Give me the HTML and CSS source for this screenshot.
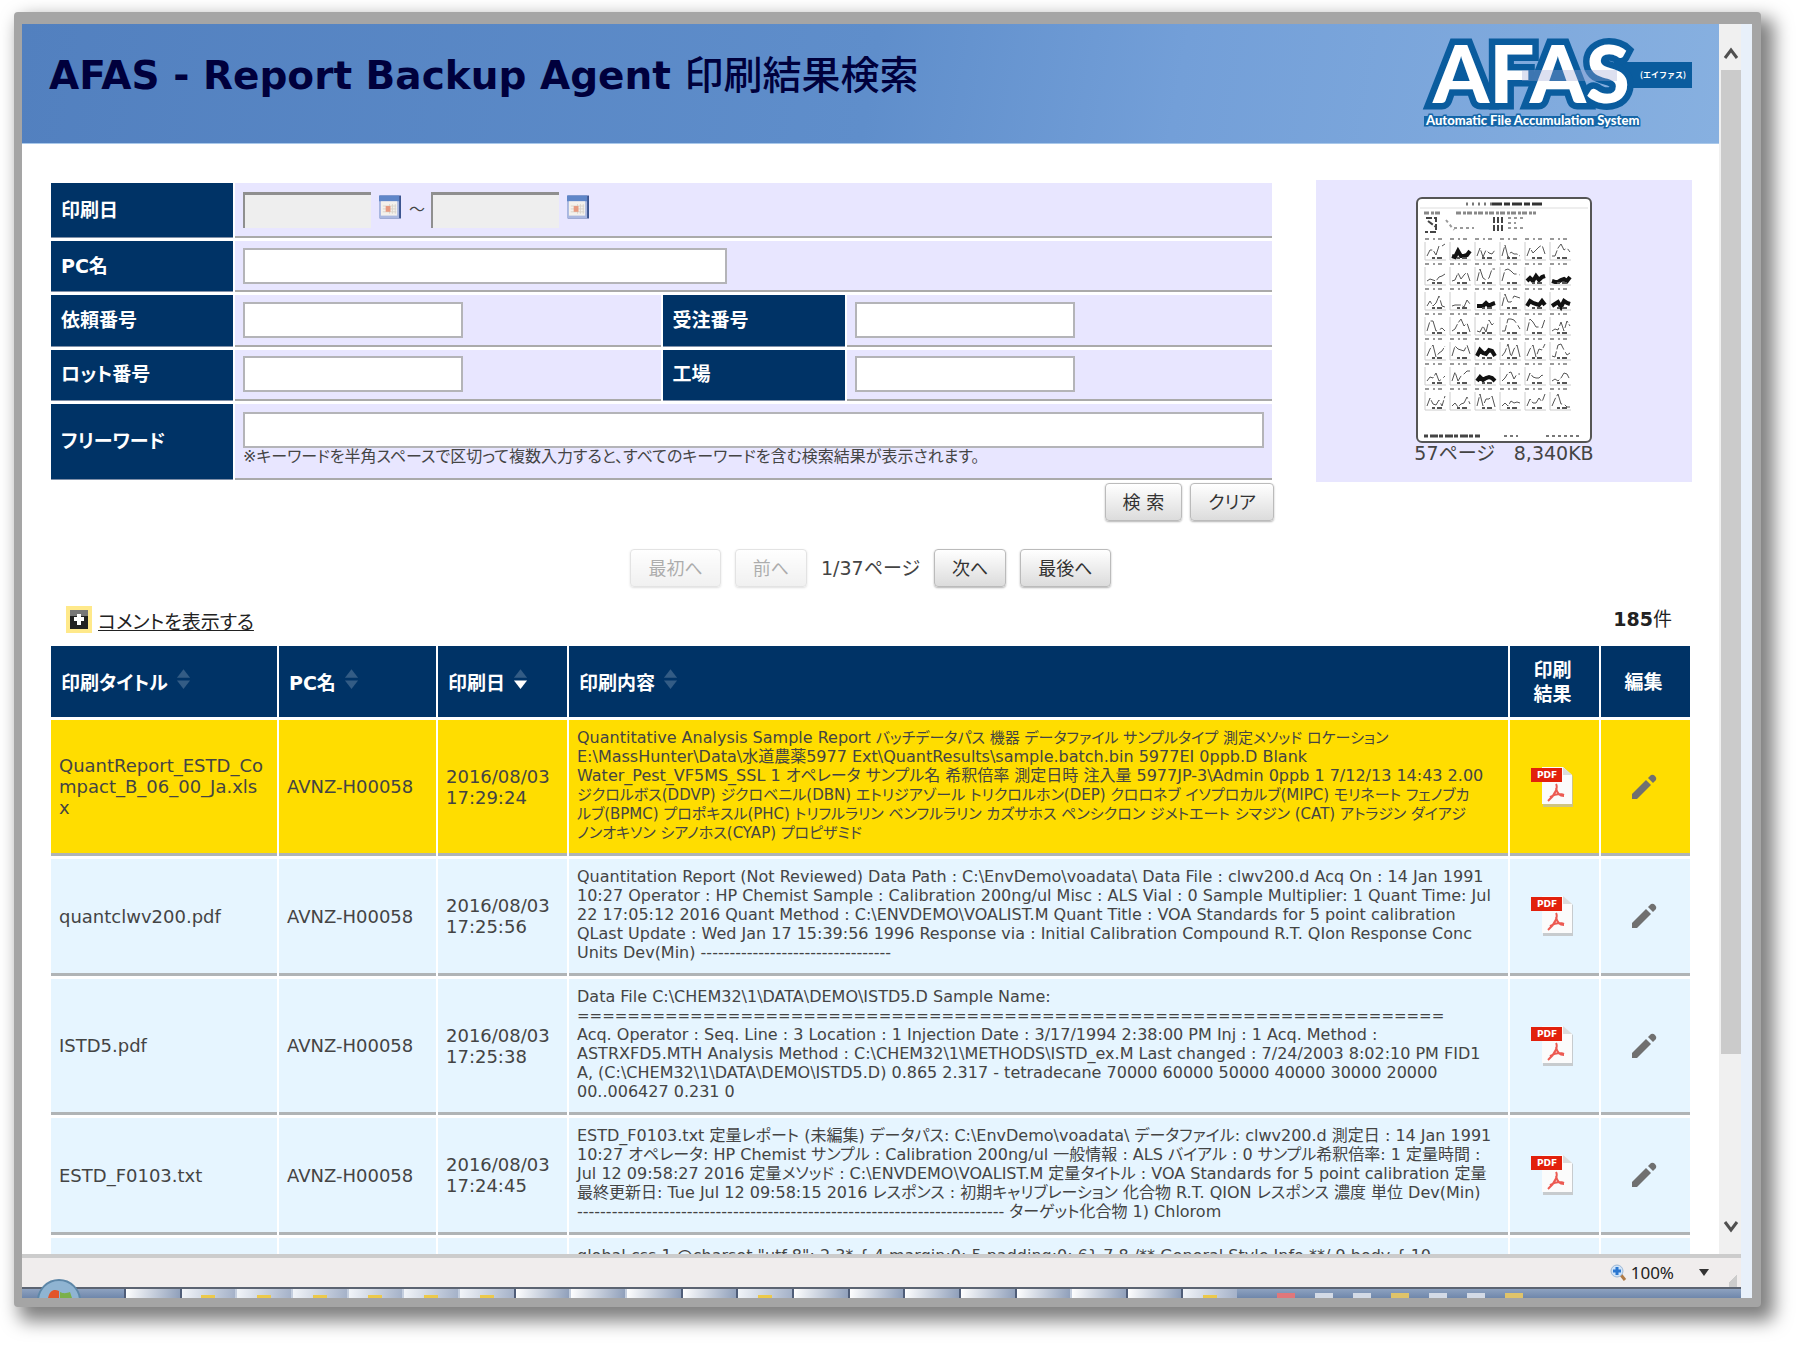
FILE: index.html
```html
<!DOCTYPE html>
<html lang="ja">
<head>
    <meta charset="UTF-8">
    <meta name="viewport" content="width=device-width, initial-scale=1.0">
    <title>AFAS - Report Backup Agent 印刷結果検索</title>
    <link rel="stylesheet" href="styles.css">
</head>
<body>
    <svg class="defs" aria-hidden="true">
        <symbol id="calendar" viewBox="0 0 23 24">
            <rect x="1" y="0" width="22" height="24" fill="#3c5590"/>
            <rect x="0" y="0" width="21" height="24" fill="#a9b7e0"/>
            <rect x="0" y="0" width="21" height="6" fill="#5f86c8"/>
            <rect x="2" y="6" width="17" height="15" fill="#f4f1ec"/>
            <path d="M11 9v10M14 9v10M17 9v10M4 11h14M4 14h14M4 17h14" stroke="#d8d4cc"/>
            <rect x="7" y="11" width="5" height="6" fill="#e79a80"/>
        </symbol>
        <symbol id="sort" viewBox="0 0 16 22">
            <path class="up" d="M1 9L8 0l7 9z"/>
            <path class="down" d="M1 12h14l-7 9z"/>
        </symbol>
        <symbol id="pdf" viewBox="0 0 44 42">
            <path d="M12 2h21l9 8v31H12z" fill="#b9b9b9" opacity=".7"/>
            <path d="M11 1h21l9 8v29H11z" fill="#fbfbfb"/>
            <path d="M32 1l9 8h-9z" fill="#dcdcdc"/>
            <rect x="0" y="2" width="31" height="14" fill="#e2200c"/>
            <text x="6" y="12" class="pdf-text">PDF</text>
            <path d="M25 18c2 3 0 10-8 17M25 22c1 5 4 8 8 8M19 31c5-3 10-4 14-2" fill="none" stroke="#ec5a52" stroke-width="2"/>
        </symbol>
        <symbol id="pencil" viewBox="0 0 26 26">
            <path d="M1 20L15 6l5 5L6 25H1z" fill="#707070"/>
            <path d="M17 4l3-3q2-1 4 1t1 4l-3 3z" fill="#707070"/>
        </symbol>
    </svg>

    <div class="window">
        <div class="view">
            <div class="page">
                <header class="header">
                    <h1>AFAS - Report Backup Agent <span>印刷結果検索</span></h1>
                    <svg class="logo" viewBox="0 0 268 92" role="img" aria-label="AFAS Automatic File Accumulation System">
                        <rect x="190" y="24" width="78" height="26" fill="#0a5c9e"/>
                        <text x="9" y="65" class="logo-name">AFAS</text>
                        <rect x="98" y="32" width="95" height="11" fill="#9ea6d4" opacity=".35"/>
                        <text x="216" y="40" class="logo-kana">(エイファス)</text>
                        <rect x="0" y="78" width="214" height="10" fill="#1566a8"/>
                        <text x="2" y="87" class="logo-sub">Automatic File Accumulation System</text>
                    </svg>
                </header>

                <main>
                    <section class="search">
                        <form>
                            <table class="search-table">
                                <colgroup><col class="s-label"><col class="s-field"><col class="s-label"><col class="s-field"></colgroup>
                                <tr class="row-date">
                                    <th><label for="date-from">印刷日</label></th>
                                    <td colspan="3">
                                        <div class="dates">
                                            <input type="text" id="date-from" class="date">
                                            <svg class="cal"><use href="#calendar"/></svg>
                                            <span>～</span>
                                            <input type="text" id="date-to" class="date" aria-label="印刷日(終了)">
                                            <svg class="cal"><use href="#calendar"/></svg>
                                        </div>
                                    </td>
                                </tr>
                                <tr>
                                    <th><label for="pc">PC名</label></th>
                                    <td colspan="3"><input type="text" id="pc" class="medium"></td>
                                </tr>
                                <tr>
                                    <th><label for="request">依頼番号</label></th>
                                    <td><input type="text" id="request" class="short"></td>
                                    <th><label for="order">受注番号</label></th>
                                    <td><input type="text" id="order" class="short"></td>
                                </tr>
                                <tr>
                                    <th><label for="lot">ロット番号</label></th>
                                    <td><input type="text" id="lot" class="short"></td>
                                    <th><label for="factory">工場</label></th>
                                    <td><input type="text" id="factory" class="short"></td>
                                </tr>
                                <tr class="row-free">
                                    <th><label for="free">フリーワード</label></th>
                                    <td colspan="3">
                                        <input type="text" id="free" class="full">
                                        <p class="note">※キーワードを半角スペースで区切って複数入力すると、すべてのキーワードを含む検索結果が表示されます。</p>
                                    </td>
                                </tr>
                            </table>
                            <div class="form-buttons">
                                <button type="button">検 索</button>
                                <button type="button">クリア</button>
                            </div>
                        </form>
                        <aside class="preview">
                            <svg class="thumb" viewBox="0 0 176 246" role="img" aria-label="レポート">
                                <rect x="1" y="1" width="174" height="244" rx="5" fill="#fff" stroke="#555" stroke-width="2"/>
                                <path d="M4 11h168" stroke="#ddd"/>
                                <g id="plots"></g>
                            </svg>
                            <p>57ページ　8,340KB</p>
                        </aside>
                    </section>

                    <nav class="pager">
                        <button type="button" disabled>最初へ</button>
                        <button type="button" disabled>前へ</button>
                        <span>1/37ページ</span>
                        <button type="button">次へ</button>
                        <button type="button">最後へ</button>
                    </nav>

                    <div class="list-head">
                        <a href="#" class="comment">
                            <svg viewBox="0 0 26 27"><rect width="26" height="27" fill="#ffe98a"/><rect x="4" y="4" width="18" height="19" fill="#222"/><rect x="4" y="4" width="18" height="6" fill="#777"/><path d="M13 8v11M8 13h10" stroke="#fff" stroke-width="4"/></svg>
                            <span>コメントを表示する</span>
                        </a>
                        <span class="count"><b>185</b>件</span>
                    </div>

                    <table class="results">
                        <colgroup><col class="c-title"><col class="c-pc"><col class="c-date"><col><col class="c-icon"><col class="c-icon"></colgroup>
                        <thead>
                            <tr>
                                <th>印刷タイトル<svg class="sort"><use href="#sort"/></svg></th>
                                <th>PC名<svg class="sort"><use href="#sort"/></svg></th>
                                <th>印刷日<svg class="sort desc"><use href="#sort"/></svg></th>
                                <th>印刷内容<svg class="sort"><use href="#sort"/></svg></th>
                                <th class="center">印刷<br>結果</th>
                                <th class="center">編集</th>
                            </tr>
                        </thead>
                        <tbody>
                            <tr class="selected">
                                <td>QuantReport_ESTD_Co<br>mpact_B_06_00_Ja.xls<br>x</td>
                                <td>AVNZ-H00058</td>
                                <td>2016/08/03 17:29:24</td>
                                <td class="body">Quantitative Analysis Sample Report <span class="small">バッチデータパス 機器 データファイル サンプルタイプ 測定メソッド ロケーション</span><br>E:\MassHunter\Data\水道農薬5977 Ext\QuantResults\sample.batch.bin 5977EI 0ppb.D Blank<br>Water_Pest_VF5MS_SSL 1 オペレータ サンプル名 希釈倍率 測定日時 注入量 5977JP-3\Admin 0ppb 1 7/12/13 14:43 2.00<br><span class="small">ジクロルボス(DDVP) ジクロベニル(DBN) エトリジアゾール トリクロルホン(DEP) クロロネブ イソプロカルブ(MIPC) モリネート フェノブカ<br>ルブ(BPMC) プロポキスル(PHC) トリフルラリン ベンフルラリン カズサホス ペンシクロン ジメトエート シマジン (CAT) アトラジン ダイアジ<br>ノンオキソン シアノホス(CYAP) プロピザミド</span></td>
                                <td class="center"><a href="#" aria-label="PDF"><svg class="pdf"><use href="#pdf"/></svg></a></td>
                                <td class="center"><a href="#" aria-label="編集"><svg class="pencil"><use href="#pencil"/></svg></a></td>
                            </tr>
                            <tr>
                                <td>quantclwv200.pdf</td>
                                <td>AVNZ-H00058</td>
                                <td>2016/08/03 17:25:56</td>
                                <td class="body">Quantitation Report (Not Reviewed) Data Path : C:\EnvDemo\voadata\ Data File : clwv200.d Acq On : 14 Jan 1991<br>10:27 Operator : HP Chemist Sample : Calibration 200ng/ul Misc : ALS Vial : 0 Sample Multiplier: 1 Quant Time: Jul<br>22 17:05:12 2016 Quant Method : C:\ENVDEMO\VOALIST.M Quant Title : VOA Standards for 5 point calibration<br>QLast Update : Wed Jan 17 15:39:56 1996 Response via : Initial Calibration Compound R.T. QIon Response Conc<br>Units Dev(Min) ---------------------------------</td>
                                <td class="center"><a href="#" aria-label="PDF"><svg class="pdf"><use href="#pdf"/></svg></a></td>
                                <td class="center"><a href="#" aria-label="編集"><svg class="pencil"><use href="#pencil"/></svg></a></td>
                            </tr>
                            <tr>
                                <td>ISTD5.pdf</td>
                                <td>AVNZ-H00058</td>
                                <td>2016/08/03 17:25:38</td>
                                <td class="body">Data File C:\CHEM32\1\DATA\DEMO\ISTD5.D Sample Name:<br><span class="small">=====================================================================</span><br>Acq. Operator : Seq. Line : 3 Location : 1 Injection Date : 3/17/1994 2:38:00 PM Inj : 1 Acq. Method :<br>ASTRXFD5.MTH Analysis Method : C:\CHEM32\1\METHODS\ISTD_ex.M Last changed : 7/24/2003 8:02:10 PM FID1<br>A, (C:\CHEM32\1\DATA\DEMO\ISTD5.D) 0.865 2.317 - tetradecane 70000 60000 50000 40000 30000 20000<br>00..006427 0.231 0</td>
                                <td class="center"><a href="#" aria-label="PDF"><svg class="pdf"><use href="#pdf"/></svg></a></td>
                                <td class="center"><a href="#" aria-label="編集"><svg class="pencil"><use href="#pencil"/></svg></a></td>
                            </tr>
                            <tr>
                                <td>ESTD_F0103.txt</td>
                                <td>AVNZ-H00058</td>
                                <td>2016/08/03 17:24:45</td>
                                <td class="body">ESTD_F0103.txt 定量レポート (未編集) データパス: C:\EnvDemo\voadata\ データファイル: clwv200.d 測定日 : 14 Jan 1991<br>10:27 オペレータ: HP Chemist サンプル : Calibration 200ng/ul 一般情報 : ALS バイアル : 0 サンプル希釈倍率: 1 定量時間 :<br>Jul 12 09:58:27 2016 定量メソッド : C:\ENVDEMO\VOALIST.M 定量タイトル : VOA Standards for 5 point calibration 定量<br>最終更新日: Tue Jul 12 09:58:15 2016 レスポンス : 初期キャリブレーション 化合物 R.T. QION レスポンス 濃度 単位 Dev(Min)<br>-------------------------------------------------------------------------- ターゲット化合物 1) Chlorom</td>
                                <td class="center"><a href="#" aria-label="PDF"><svg class="pdf"><use href="#pdf"/></svg></a></td>
                                <td class="center"><a href="#" aria-label="編集"><svg class="pencil"><use href="#pencil"/></svg></a></td>
                            </tr>
                            <tr>
                                <td></td>
                                <td></td>
                                <td></td>
                                <td class="body">global.css 1 @charset "utf-8"; 2 3* { 4 margin:0; 5 padding:0; 6} 7 8 /** General Style Info **/ 9 body { 10</td>
                                <td></td>
                                <td></td>
                            </tr>
                        </tbody>
                    </table>
                </main>
            </div>

            <div class="scrollbar">
                <svg viewBox="0 0 20 46"><path d="M4 34l6-8 6 8" /></svg>
                <div class="thumb-bar"></div>
                <svg viewBox="0 0 20 46"><path d="M4 14l6 8 6-8" /></svg>
            </div>
        </div>

        <footer class="statusbar">
            <svg class="zoom-icon" viewBox="0 0 17 18"><path d="M11 11l4 5" stroke="#b07a45" stroke-width="3"/><circle cx="7" cy="7" r="6" fill="#cfe3f8" stroke="#9db8d6"/><path d="M7 3v8M3 7h8" stroke="#2b77d0" stroke-width="3"/></svg>
            <span>100%</span>
            <i class="caret"></i>
            <i class="grip"></i>
        </footer>

        <div class="taskbar">
            <svg class="orb" viewBox="0 0 46 20"><circle cx="23" cy="23" r="21" fill="#8fb4d2" stroke="#5d87a8" stroke-width="2"/><path d="M12 20c2-9 7-9 11-7v7z" fill="#e2552a"/><path d="M24 20v-6c4 2 7 1 10 0l2 6z" fill="#7bb04a"/></svg>
            <div class="tasks" id="tasks"></div>
            <div class="tray"><i class="red"></i><i></i><i></i><i class="yellow"></i><i></i><i></i><i class="yellow"></i></div>
        </div>
    </div>

    <script src="script.js"></script>
</body>
</html>
```

FILE: styles.css
```css
* {
    box-sizing: border-box;
}
body {
    margin: 0;
    padding: 12px 39px 39px 14px;
    height: 100vh;
    overflow: hidden;
    background-color: #fff;
    font-family: "DejaVu Sans", "Noto Sans CJK JP", sans-serif;
    font-feature-settings: "palt";
    font-size: 16px;
    line-height: 21px;
    color: #444;
}
.defs {
    position: absolute;
    width: 0;
    height: 0;
}
.window {
    display: flex;
    flex-direction: column;
    height: 100%;
    border: 9px solid #a5a5a5;
    border-width: 12px 9px 9px 8px;
    border-radius: 4px;
    background-color: #e8f0fa;
    box-shadow: 9px 10px 18px 4px rgba(0,0,0,0.5);
}
.view {
    flex: 1;
    display: flex;
    min-height: 0;
    margin-right: 11px;
    background-color: #fff;
}
.page {
    flex: 1;
    min-width: 0;
    overflow: hidden;
}

/* header */
.header {
    display: flex;
    justify-content: space-between;
    height: 120px;
    padding: 14px 27px 0;
    border-bottom: 1px solid #a9c8ea;
    background: linear-gradient(100deg, #5280bf 0%, #5f8ecb 50%, #739fd8 68%, #87b0e0 100%);
}
h1 {
    margin: 16px 0 0;
    font-size: 39px;
    line-height: 44px;
    color: #00003c;
    white-space: nowrap;
}
h1 span {
    font-weight: 500;
}
.logo {
    width: 268px;
    height: 92px;
    overflow: visible;
}
.logo-name {
    font: 900 80px Lato, sans-serif;
    fill: #fff;
    stroke: #0a5c9e;
    stroke-width: 13px;
    paint-order: stroke;
}
.logo-kana {
    font: bold 8px "Noto Sans CJK JP", sans-serif;
    fill: #fff;
}
.logo-sub {
    font: 900 13px Lato, sans-serif;
    fill: #fff;
    stroke: #1566a8;
    stroke-width: 3px;
    paint-order: stroke;
}

/* search form */
main {
    padding: 36px 27px 0;
}
.search {
    display: flex;
    gap: 42px;
    align-items: flex-start;
}
.search form {
    flex: 1;
}
table {
    width: 100%;
    table-layout: fixed;
    border-spacing: 2px 3px;
}
th {
    background-color: #003366;
    color: #fff;
    text-align: left;
    padding: 0 10px;
    font-size: 19px;
}
.search-table {
    height: 303px;
}
.search-table th {
    border-bottom: 1px solid #8090a8;
}
.search-table td {
    padding: 0 8px;
    background-color: #e8e6ff;
    border-bottom: 2px solid #aaa;
}
.search-table tr {
    height: 51px;
}
.search-table .row-date {
    height: 55px;
}
.search-table .row-free {
    height: 76px;
}
.search-table .row-free td {
    padding-bottom: 4px;
}
.s-label {
    width: 182px;
}
input {
    display: block;
    height: 36px;
    border: 2px solid #b4b4b8;
    background-color: #fff;
    font: inherit;
}
.dates {
    display: flex;
    align-items: center;
    gap: 8px;
}
.dates span {
    width: 14px;
    font-feature-settings: normal;
}
.date {
    width: 128px;
    border-width: 3px 0 0 2px;
    border-color: #8f8f8f;
    background-color: #eee;
}
.cal {
    width: 22px;
    height: 24px;
    margin-bottom: 5px;
}
.medium {
    width: 484px;
}
.short {
    width: 220px;
}
.full {
    width: 100%;
}
.note {
    margin: 0;
    font-size: 16px;
    line-height: 18px;
    white-space: nowrap;
}
.form-buttons {
    display: flex;
    justify-content: flex-end;
    gap: 8px;
}
button {
    height: 38px;
    padding: 0 17px;
    border: 1px solid #bbb;
    border-radius: 4px;
    background: linear-gradient(#fff, #dcdcdc);
    box-shadow: 0 1px 2px rgba(0,0,0,0.3);
    font: inherit;
    font-feature-settings: inherit;
    font-size: 18px;
    color: #333;
}
button:disabled {
    opacity: 0.4;
}
.preview {
    width: 376px;
    height: 302px;
    padding-top: 17px;
    background-color: #e8e6ff;
    text-align: center;
}
.preview p {
    margin: 0;
    font-size: 19px;
}
.thumb {
    display: block;
    width: 176px;
    height: 246px;
    margin: 0 auto;
}

/* pager */
.pager {
    display: flex;
    justify-content: center;
    align-items: center;
    gap: 14px;
    margin-top: 28px;
    font-size: 19px;
}
.list-head {
    display: flex;
    justify-content: space-between;
    align-items: center;
    padding: 8px 20px 0 17px;
    height: 56px;
}
.comment {
    display: flex;
    gap: 6px;
    color: #222;
    font-size: 19px;
}
.comment svg {
    width: 26px;
    height: 27px;
}
.comment span {
    margin-top: 6px;
}
.count {
    font-size: 19px;
    color: #222;
}

/* result list */
.c-title {
    width: 226px;
}
.c-pc {
    width: 157px;
}
.c-date {
    width: 129px;
}
.c-icon {
    width: 89px;
}
.results th {
    height: 71px;
    line-height: 24px;
}
.results td {
    height: 117px;
    padding: 0 8px;
    background-color: #e6f5ff;
    border-bottom: 3px solid #b0b4b6;
    font-size: 18px;
}
.results .body {
    padding: 8px 4px 11px 8px;
    font-size: 16px;
    line-height: 19px;
    vertical-align: top;
    white-space: nowrap;
}
.small {
    font-size: 15px;
    line-height: 15px;
}
.results .selected td {
    background-color: #ffdd00;
}
.results .center {
    padding: 0 4px 0 0;
    text-align: center;
}
.sort {
    width: 15px;
    height: 21px;
    margin-left: 8px;
    fill: #335c85;
}
.sort.desc {
    --down: #fff;
}
.down {
    fill: var(--down, #335c85);
}
.pdf {
    width: 44px;
    height: 42px;
    vertical-align: middle;
}
.pdf-text {
    font: bold 9px "DejaVu Sans", sans-serif;
    fill: #fff;
}
.pencil {
    width: 26px;
    height: 26px;
    vertical-align: middle;
}

/* window parts */
.scrollbar {
    display: flex;
    flex-direction: column;
    width: 22px;
    border-left: 2px solid #f0f0f0;
    background-color: #f0f0f0;
}
.scrollbar svg {
    height: 46px;
    fill: none;
    stroke: #505050;
    stroke-width: 3px;
}
.thumb-bar {
    height: 80%;
    margin-bottom: auto;
    background-color: #cbcbcb;
}
.statusbar {
    display: flex;
    align-items: center;
    justify-content: flex-end;
    height: 33px;
    margin-right: 11px;
    padding-right: 4px;
    border-top: 4px solid #ccc;
    background-color: #f0eded;
    font-family: "Noto Sans", sans-serif;
    font-size: 17px;
    color: #222;
}
.zoom-icon {
    width: 17px;
    height: 18px;
    margin-right: 4px;
}
.caret {
    margin: 0 20px 0 25px;
    border: 5px solid transparent;
    border-top: 7px solid #333;
    border-bottom: 0;
}
.grip {
    width: 8px;
    height: 16px;
    align-self: flex-end;
    background: linear-gradient(135deg, transparent 50%, #ccc 50%);
}
.taskbar {
    display: flex;
    height: 11px;
    margin-right: 11px;
    border-top: 2px solid #5c6472;
    background: linear-gradient(#8ea2c0, #6f87ab);
}
.orb {
    width: 46px;
    height: 20px;
    margin: -11px 42px 0 14px;
}
.tasks {
    display: flex;
    flex: 1;
}
.tasks span {
    flex: 1;
    border-left: 2px solid #4f5d78;
    background: linear-gradient(100deg, #fff, #8f9fba);
}
.tasks .joined {
    border-left-color: #c4cede;
}
.tasks .mark {
    background: linear-gradient(#ecc94b, #ecc94b) 50% 100% / 14px 3px no-repeat, linear-gradient(100deg, #f2f5f9, #a4b1c8);
}
.tray {
    display: flex;
    width: 504px;
    padding-left: 40px;
    gap: 20px;
    align-items: flex-end;
}
.tray i {
    width: 18px;
    height: 5px;
    background-color: #d3dae6;
}
.tray .red {
    background-color: #e0777a;
}
.tray .yellow {
    background-color: #dfc36a;
}
```

FILE: script.js
```js
// report thumbnail: header lines and a 6 x 7 grid of small chromatograms
const ns = 'http://www.w3.org/2000/svg';
const plots = document.getElementById('plots');

function line(d, color, width, dash) {
    const p = document.createElementNS(ns, 'path');
    p.setAttribute('d', d);
    p.setAttribute('stroke', color);
    p.setAttribute('stroke-width', width);
    p.setAttribute('fill', 'none');
    if (dash) p.setAttribute('stroke-dasharray', dash);
    plots.appendChild(p);
}

let seed = 7;
function rnd(n) {
    seed = (seed * 16807) % 2147483647;
    return seed % n;
}

line('M50 7h26', '#777', 3, '2 4');
line('M76 7h50', '#333', 3, '10 2 6 2');
line('M8 16h18M40 16h80', '#888', 3, '5 2 3 1');
line('M10 21h10v14h-11M12 24l8 6M78 20v16M82 20v16M86 20v14', '#444', 2, '6 2');
line('M30 23l8 10M38 31h20M92 21h18M92 26h8M92 31h18', '#999', 2, '3 3');
line('M8 239h56', '#444', 3, '4 2 8 1');
line('M88 239h14M130 239h36', '#777', 2, '3 3');

// plots drawn with thick traces, counted row by row
const heavy = [1, 10, 11, 14, 16, 17, 26, 32];
for (let r = 0; r < 7; r++) {
    for (let c = 0; c < 6; c++) {
        const x = 8 + c * 25;
        const y = 41 + r * 25;
        const dark = heavy.includes(r * 6 + c);
        line(`M${x + 1} ${y + 1}h20`, '#999', 2, '4 4 2 3');
        line(`M${x + 1} ${y + 4}v18h21`, '#ccc', 1);
        let d = `M${x + 3} ${y + 18}`;
        for (let i = 1; i < 7; i++) d += `L${x + 3 + i * 3} ${y + 19 - rnd(dark ? 8 : 14)}`;
        line(d, dark ? '#111' : '#555', dark ? 4 : 1, dark ? '' : '9 2 14 3');
        line(`M${x + 8} ${y + 20}h12`, '#555', 2, '3 2 5 2');
    }
}

// taskbar buttons, kinds: n = single, j = joined to the one before, m/k = same with a folder mark
const tasks = document.getElementById('tasks');
'nmkkkkknjjnmnnnnnjnm'.split('').forEach(function (kind) {
    const s = document.createElement('span');
    if ('jk'.includes(kind)) s.classList.add('joined');
    if ('mk'.includes(kind)) s.classList.add('mark');
    tasks.appendChild(s);
});
```
